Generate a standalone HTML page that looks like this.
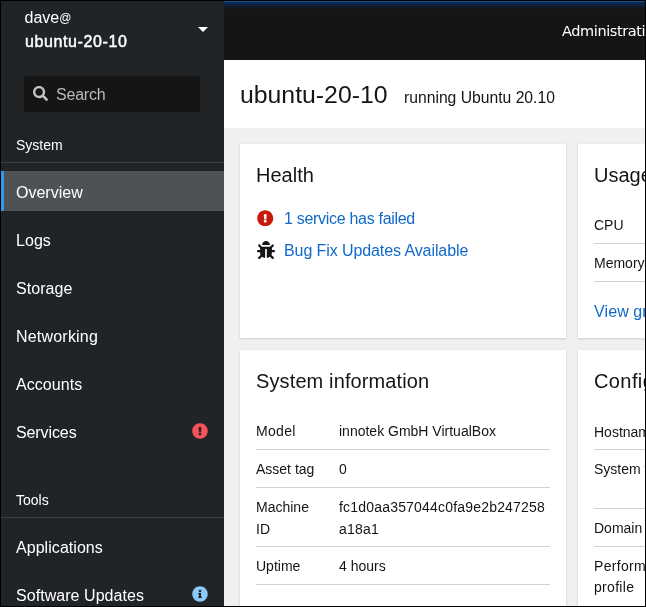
<!DOCTYPE html>
<html><head><meta charset="utf-8">
<style>
html,body{margin:0;padding:0;}
body{width:646px;height:607px;overflow:hidden;background:#000;font-family:"Liberation Sans",sans-serif;position:relative;}
#wrap{will-change:transform;position:absolute;left:1px;top:1px;width:644px;height:605px;overflow:hidden;background:#f0f0f0;}
#side{position:absolute;left:0;top:0;width:223px;height:605px;background:#212427;}
#top{position:absolute;left:223px;top:0;width:421px;height:59px;background:#151515;}
#topline{position:absolute;left:0;top:0;width:100%;height:9px;background:linear-gradient(#20508c 0,#20508c 1px,#0c2d58 1px,#0e2747 3px,#131b27 6px,#151515 9px);}
.abs{position:absolute;white-space:nowrap;}
.nav{position:absolute;left:15px;color:#fff;font-size:16px;letter-spacing:0.05px;white-space:nowrap;transform:translateY(-0.5px);}
.sec{position:absolute;left:15px;color:#fff;font-size:14px;}
.hr{position:absolute;left:0;width:223px;height:1px;background:#3c3f42;}
#main-head{position:absolute;left:223px;top:59px;width:421px;height:68px;background:#fff;}
.card{position:absolute;background:#fff;box-shadow:0 1px 2px rgba(3,3,3,.12),0 0 2px rgba(3,3,3,.06);}
.h2{position:absolute;font-size:20px;color:#151515;white-space:nowrap;}
.t{position:absolute;font-size:14px;color:#151515;white-space:nowrap;}
.line{position:absolute;height:1px;background:#d2d2d2;}
a{color:#1169c9;text-decoration:none;}
</style></head><body>
<div id="wrap">
 <div id="side">
  <div class="abs" style="left:23.5px;top:8px;font-size:16px;color:#fff;">dave<span style="font-size:12px;position:relative;top:-1px;">@</span></div>
  <div class="abs" style="left:24px;top:32px;font-size:16px;color:#fff;-webkit-text-stroke:0.45px #fff;letter-spacing:0.6px;">ubuntu-20-10</div>
  <div class="abs" style="left:197px;top:26px;width:0;height:0;border-left:5px solid transparent;border-right:5px solid transparent;border-top:5px solid #fff;"></div>
  <div class="abs" style="left:23px;top:75px;width:176px;height:36px;background:#151515;"></div>
  <svg class="abs" style="left:31.7px;top:84.8px" width="15" height="15" viewBox="0 0 512 512"><path fill="#c4c4c4" d="M505 442.7L405.3 343c-4.500-4.500-10.600-7-17-7H372c27.600-35.300 44-79.700 44-128C416 93.100 322.900 0 208 0S0 93.100 0 208s93.100 208 208 208c48.300 0 92.700-16.400 128-44v16.300c0 6.400 2.500 12.500 7 17l99.700 99.700c9.400 9.400 24.600 9.400 33.900 0l28.300-28.300c9.400-9.400 9.400-24.600.1-34zM208 336c-70.700 0-128-57.200-128-128 0-70.700 57.200-128 128-128 70.700 0 128 57.200 128 128 0 70.700-57.200 128-128 128z"/></svg>
  <div class="abs" style="left:55px;top:85px;font-size:16px;color:#b8bbbe;letter-spacing:-0.2px;">Search</div>
  <div class="sec" style="top:136px;">System</div>
  <div class="hr" style="top:161px;"></div>
  <div class="abs" style="left:0;top:170px;width:223px;height:40px;background:#4f5255;"></div>
  <div class="abs" style="left:0;top:170px;width:3px;height:40px;background:#2b9af3;"></div>
  <div class="nav" style="top:183px;letter-spacing:0;">Overview</div>
  <div class="nav" style="top:231px;">Logs</div>
  <div class="nav" style="top:279px;">Storage</div>
  <div class="nav" style="top:327px;letter-spacing:0.2px;">Networking</div>
  <div class="nav" style="top:375px;">Accounts</div>
  <div class="nav" style="top:423px;letter-spacing:-0.1px;">Services</div>
  <svg class="abs" style="left:191px;top:422px" width="16" height="16" viewBox="0 0 512 512"><path fill="#f5525a" d="M504 256c0 136.997-111.043 248-248 248S8 392.997 8 256C8 119.083 119.043 8 256 8s248 111.083 248 248zm-248 50c-25.405 0-46 20.595-46 46s20.595 46 46 46 46-20.595 46-46-20.595-46-46-46zm-43.673-165.346l7.418 136c.347 6.364 5.609 11.346 11.982 11.346h48.546c6.373 0 11.635-4.982 11.982-11.346l7.418-136c.375-6.874-5.098-12.654-11.982-12.654h-63.383c-6.884 0-12.356 5.780-11.981 12.654z"/></svg>
  <div class="sec" style="top:491px;">Tools</div>
  <div class="hr" style="top:516px;"></div>
  <div class="nav" style="top:538px;">Applications</div>
  <div class="nav" style="top:586px;">Software Updates</div>
  <svg class="abs" style="left:191px;top:585.3px" width="16" height="16" viewBox="0 0 512 512"><path fill="#8cc8f9" d="M256 8C119.043 8 8 119.083 8 256c0 136.997 111.043 248 248 248s248-111.003 248-248C504 119.083 392.957 8 256 8zm0 110c23.196 0 42 18.804 42 42s-18.804 42-42 42-42-18.804-42-42 18.804-42 42-42zm56 254c0 6.627-5.373 12-12 12h-88c-6.627 0-12-5.373-12-12v-24c0-6.627 5.373-12 12-12h12v-64h-12c-6.627 0-12-5.373-12-12v-24c0-6.627 5.373-12 12-12h64c6.627 0 12 5.373 12 12v100h12c6.627 0 12 5.373 12 12v24z"/></svg>
 </div>
 <div id="top"><div id="topline"></div>
  <div class="abs" style="left:338px;top:22px;font-size:14.5px;letter-spacing:-0.4px;color:#fff;font-family:'DejaVu Sans',sans-serif;">Administrative access</div>
 </div>
 <div id="main-head">
  <div class="abs" style="left:16px;top:20px;font-size:24.8px;color:#151515;transform:translateY(0.6px);">ubuntu-20-10</div>
  <div class="abs" style="left:180px;top:29px;font-size:15.7px;color:#151515;">running Ubuntu 20.10</div>
 </div>
 <div class="card" style="left:239px;top:143px;width:326px;height:194px;">
  <div class="h2" style="left:16px;top:20px;">Health</div>
  <svg class="abs" style="left:17.1px;top:65.9px" width="16.5" height="16.5" viewBox="0 0 512 512"><path fill="#c9190b" d="M504 256c0 136.997-111.043 248-248 248S8 392.997 8 256C8 119.083 119.043 8 256 8s248 111.083 248 248zm-248 50c-25.405 0-46 20.595-46 46s20.595 46 46 46 46-20.595 46-46-20.595-46-46-46zm-43.673-165.346l7.418 136c.347 6.364 5.609 11.346 11.982 11.346h48.546c6.373 0 11.635-4.982 11.982-11.346l7.418-136c.375-6.874-5.098-12.654-11.982-12.654h-63.383c-6.884 0-12.356 5.780-11.981 12.654z"/></svg>
  <div class="abs" style="left:44px;top:66px;font-size:16px;letter-spacing:-0.3px;"><a>1 service has failed</a></div>
  <svg class="abs" style="left:16.9px;top:97.2px" width="18" height="18" viewBox="0 0 512 512"><path fill="#151515" d="M511.988 288.900c-.478 17.430-15.217 31.100-32.653 31.100H424v16c0 21.864-4.882 42.584-13.600 61.145l60.228 60.228c12.496 12.497 12.496 32.758 0 45.255-12.498 12.497-32.759 12.496-45.256 0l-54.736-54.736C345.886 467.965 314.351 480 280 480V236c0-6.627-5.373-12-12-12h-24c-6.627 0-12 5.373-12 12v244c-34.351 0-65.886-12.035-90.636-32.108l-54.736 54.736c-12.498 12.497-32.759 12.496-45.256 0-12.496-12.497-12.496-32.758 0-45.255l60.228-60.228C92.882 378.584 88 357.864 88 336v-16H32.666C15.230 320 .491 306.330.013 288.900-.484 270.816 14.028 256 32 256h56v-58.745l-46.628-46.628c-12.496-12.497-12.496-32.758 0-45.255 12.498-12.497 32.758-12.497 45.256 0L141.255 160h229.489l54.627-54.627c12.498-12.497 32.758-12.497 45.256 0 12.496 12.497 12.496 32.758 0 45.255L424 197.255V256h56c17.972 0 32.484 14.816 31.988 32.900zM257 0c-61.856 0-112 50.144-112 112h224C369 50.144 318.856 0 257 0z"/></svg>
  <div class="abs" style="left:44px;top:98px;font-size:16px;letter-spacing:-0.09px;"><a>Bug Fix Updates Available</a></div>
 </div>
 <div class="card" style="left:577px;top:143px;width:120px;height:194px;">
  <div class="h2" style="left:16px;top:20px;">Usage</div>
  <div class="t" style="left:16px;top:73px;">CPU</div>
  <div class="line" style="left:16px;top:99px;width:100px;"></div>
  <div class="t" style="left:16px;top:111px;">Memory</div>
  <div class="line" style="left:16px;top:137px;width:100px;"></div>
  <div class="abs" style="left:16px;top:159px;font-size:16px;letter-spacing:0.1px;"><a>View graphs</a></div>
 </div>
 <div class="card" style="left:239px;top:349px;width:326px;height:300px;">
  <div class="h2" style="left:16px;top:20px;letter-spacing:0.12px;">System information</div>
  <div class="t" style="left:16px;top:74px;letter-spacing:0.3px;transform:translateY(-0.6px)">Model</div><div class="t" style="left:99px;top:74px;transform:translateY(-0.6px)">innotek GmbH VirtualBox</div>
  <div class="line" style="left:16px;top:99px;width:294px;"></div>
  <div class="t" style="left:16px;top:111px;">Asset tag</div><div class="t" style="left:99px;top:111px;">0</div>
  <div class="line" style="left:16px;top:137px;width:294px;"></div>
  <div class="t" style="left:16px;top:149px;transform:translateY(0.3px)">Machine</div><div class="t" style="left:16px;top:171px;transform:translateY(-0.2px)">ID</div>
  <div class="t" style="left:99px;top:149px;letter-spacing:0.19px;transform:translateY(0.3px)">fc1d0aa357044c0fa9e2b247258</div><div class="t" style="left:99px;top:171px;letter-spacing:0.19px;transform:translateY(-0.2px)">a18a1</div>
  <div class="line" style="left:16px;top:196px;width:294px;"></div>
  <div class="t" style="left:16px;top:208px;">Uptime</div><div class="t" style="left:99px;top:208px;">4 hours</div>
  <div class="line" style="left:16px;top:234px;width:294px;"></div>
 </div>
 <div class="card" style="left:577px;top:349px;width:120px;height:300px;">
  <div class="h2" style="left:16px;top:20px;letter-spacing:0.4px;">Configuration</div>
  <div class="t" style="left:16px;top:74px;">Hostname</div>
  <div class="line" style="left:16px;top:99px;width:100px;"></div>
  <div class="t" style="left:16px;top:111px;">System time</div>
  <div class="line" style="left:16px;top:158px;width:100px;"></div>
  <div class="t" style="left:16px;top:170px;">Domain</div>
  <div class="line" style="left:16px;top:196px;width:100px;"></div>
  <div class="t" style="left:16px;top:206px;line-height:21px;letter-spacing:0.3px;">Performance<br>profile</div>
 </div>
</div>
</body></html>
